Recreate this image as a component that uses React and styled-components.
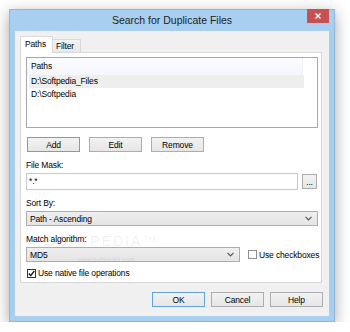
import React from "react";
import styled, { createGlobalStyle } from "styled-components";

const GlobalStyle = createGlobalStyle`
  html, body { margin: 0; padding: 0; background: #fff; }
  body { font-family: "Liberation Sans", Arial, sans-serif; color: #000; }
`;

const Window = styled.div`
  margin: 9px 0 0 9px;
  width: 326px;
  height: 313px;
  box-sizing: border-box;
  border: 1px solid #8cb6de;
  background: #a9cff0;
  padding: 0 5px 5px;
  display: flex;
  flex-direction: column;
  box-shadow: 0 4px 14px rgba(0, 0, 0, 0.35);
`;

const TitleBar = styled.div`
  height: 21px;
  display: grid;
  grid-template-columns: 22px 1fr 22px;
  align-items: start;
`;

const Title = styled.div`
  grid-column: 2;
  text-align: center;
  line-height: 21px;
  font-size: 10.5px;
  color: #222;
`;

const Close = styled.div`
  grid-column: 3;
  height: 14px;
  margin-top: -1px;
  background: #c75050;
  display: flex;
  align-items: center;
  justify-content: center;
`;

const Content = styled.div`
  flex: 1;
  background: #f0f0f0;
  padding: 5px 7px 0 5px;
  display: flex;
  flex-direction: column;
  font-size: 8.5px;
  letter-spacing: -0.15px;
`;

const Tabs = styled.div`
  display: flex;
  align-items: flex-end;
  height: 17px;
  margin-bottom: -1px;
  position: relative;
  z-index: 1;
`;

const Tab = styled.div`
  box-sizing: border-box;
  width: ${(p) => (p.$active ? "33px" : "28px")};
  height: ${(p) => (p.$active ? "17px" : "14px")};
  border: 1px solid #d9d9d9;
  border-left: ${(p) => (p.$active ? "1px solid #d9d9d9" : "none")};
  border-bottom: ${(p) => (p.$active ? "none" : "1px solid #d9d9d9")};
  background: ${(p) => (p.$active ? "#fff" : "linear-gradient(#f3f3f3, #e8e8e8)")};
  padding-left: ${(p) => (p.$active ? "4px" : "3px")};
  line-height: ${(p) => (p.$active ? "15px" : "12px")};
`;

const Panel = styled.div`
  position: relative;
  box-sizing: border-box;
  height: 231px;
  border: 1px solid #d9d9d9;
  background: #fff;
  padding: 4px 3px 0 5px;
`;

const List = styled.div`
  box-sizing: border-box;
  height: 71px;
  border: 1px solid #a8a8a8;
  background: #fff;
`;

const ListHeader = styled.div`
  height: 17px;
  line-height: 17px;
  display: flex;
`;

const HeaderCell = styled.div`
  width: 276px;
  padding-left: 4px;
  box-sizing: border-box;
  background: linear-gradient(#fbfcfe, #f3f6fb);
  border-right: 1px solid #eef1f6;
`;

const Row = styled.div`
  height: 13px;
  line-height: 13px;
  margin-left: 2px;
  width: 275px;
  padding-left: 2px;
  box-sizing: border-box;
  background: ${(p) => (p.$selected ? "#eeeeee" : "transparent")};
`;

const ButtonRow = styled.div`
  display: flex;
  gap: 9px;
  margin: 9px 0 0 1px;
`;

const Button = styled.div`
  box-sizing: border-box;
  flex-shrink: 0;
  width: 53px;
  height: 15px;
  border: 1px solid ${(p) => (p.$focused ? "#62a2e0" : "#adadad")};
  background: linear-gradient(#f2f2f2, #e6e6e6);
  display: flex;
  align-items: center;
  justify-content: center;
`;

const Label = styled.div`
  line-height: 12px;
  margin: 7px 0 2px;
  white-space: nowrap;
`;

const InputRow = styled.div`
  display: flex;
  align-items: center;
  gap: 4px;
`;

const Input = styled.div`
  box-sizing: border-box;
  width: 272px;
  height: 17px;
  border: 1px solid #c9c9c9;
  background: #fff;
  padding-left: 2px;
  line-height: 14px;
`;

const SmallButton = styled(Button)`
  width: 15px;
  height: 15px;
  align-items: flex-end;
  padding-bottom: 3px;
  line-height: 6px;
`;

const Select = styled.div`
  box-sizing: border-box;
  flex-shrink: 0;
  width: ${(p) => p.$width}px;
  height: 15px;
  border: 1px solid #adadad;
  background: linear-gradient(#efefef, #e4e4e4);
  display: flex;
  align-items: center;
  justify-content: space-between;
  padding: 0 5px 0 3px;
`;

const MatchRow = styled.div`
  display: flex;
  align-items: center;
`;

const CheckLabel = styled.label`
  display: flex;
  align-items: center;
  gap: 2px;
  white-space: nowrap;
  margin-left: ${(p) => p.$indent}px;
  margin-top: ${(p) => p.$top || 0}px;
`;

const Box = styled.span`
  box-sizing: border-box;
  flex-shrink: 0;
  width: 9px;
  height: 9px;
  border: 1px solid ${(p) => (p.$checked ? "#333" : "#8f8f8f")};
  background: #fff;
  display: flex;
  align-items: center;
  justify-content: center;
`;

const Footer = styled.div`
  display: flex;
  justify-content: flex-end;
  gap: 6px;
  margin: 9px -1px 0 0;
`;

const Watermark = styled.div`
  position: absolute;
  left: 24px;
  top: 182px;
  pointer-events: none;
  text-align: center;
  color: rgba(0, 0, 0, 0.07);
`;

const WatermarkBig = styled.div`
  font-size: 14px;
  letter-spacing: 2px;
  line-height: 12px;
`;

const WatermarkSmall = styled.div`
  font-size: 7px;
  margin-top: 9px;
  margin-left: 8px;
  color: rgba(0, 0, 0, 0.1);
`;

const Chevron = () => (
  <svg width="7" height="5" viewBox="0 0 7 5">
    <path d="M0.5 0.8 L3.5 3.8 L6.5 0.8" fill="none" stroke="#555" strokeWidth="1.2" />
  </svg>
);

const Check = () => (
  <svg width="7" height="7" viewBox="0 0 7 7">
    <path d="M0.8 3.6 L2.7 5.6 L6.3 1" fill="none" stroke="#222" strokeWidth="1.5" />
  </svg>
);

const App = () => (
  <>
    <GlobalStyle />
    <Window>
      <TitleBar>
        <Title>Search for Duplicate Files</Title>
        <Close>
          <svg width="6" height="6" viewBox="0 0 6 6">
            <path d="M0.5 0.5 L5.5 5.5 M5.5 0.5 L0.5 5.5" stroke="#fff" strokeWidth="1.4" />
          </svg>
        </Close>
      </TitleBar>
      <Content>
        <Tabs>
          <Tab $active>Paths</Tab>
          <Tab>Filter</Tab>
        </Tabs>
        <Panel>
          <List>
            <ListHeader>
              <HeaderCell>Paths</HeaderCell>
            </ListHeader>
            <Row $selected>D:\Softpedia_Files</Row>
            <Row>D:\Softpedia</Row>
          </List>
          <ButtonRow>
            <Button $focused>Add</Button>
            <Button>Edit</Button>
            <Button>Remove</Button>
          </ButtonRow>
          <Label>File Mask:</Label>
          <InputRow>
            <Input>*.*</Input>
            <SmallButton>...</SmallButton>
          </InputRow>
          <Label>Sort By:</Label>
          <Select $width={292}>
            <span>Path - Ascending</span>
            <Chevron />
          </Select>
          <Label>Match algorithm:</Label>
          <MatchRow>
            <Select $width={214}>
              <span>MD5</span>
              <Chevron />
            </Select>
            <CheckLabel $indent={8}>
              <Box />
              Use checkboxes
            </CheckLabel>
          </MatchRow>
          <CheckLabel $indent={1} $top={6}>
            <Box $checked>
              <Check />
            </Box>
            Use native file operations
          </CheckLabel>
          <Watermark>
            <WatermarkBig>SOFTPEDIA™</WatermarkBig>
            <WatermarkSmall>www.softpedia.com</WatermarkSmall>
          </Watermark>
        </Panel>
        <Footer>
          <Button $focused>OK</Button>
          <Button>Cancel</Button>
          <Button>Help</Button>
        </Footer>
      </Content>
    </Window>
  </>
);

export default App;
